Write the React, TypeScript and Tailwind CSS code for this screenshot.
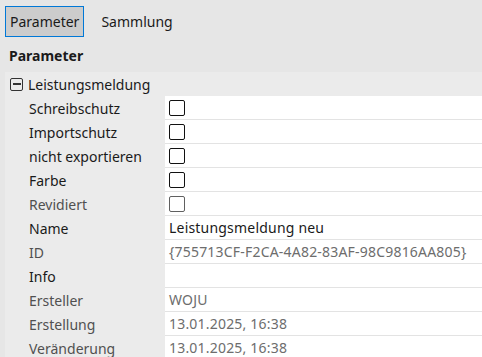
import React from "react";

type Row = {
  label: string;
  value?: string;
  check?: boolean;
  dimLabel?: boolean;
  dimValue?: boolean;
};

const rows: Row[] = [
  { label: "Schreibschutz", check: true },
  { label: "Importschutz", check: true },
  { label: "nicht exportieren", check: true },
  { label: "Farbe", check: true },
  { label: "Revidiert", check: true, dimLabel: true },
  { label: "Name", value: "Leistungsmeldung neu" },
  { label: "ID", value: "{755713CF-F2CA-4A82-83AF-98C9816AA805}", dimLabel: true, dimValue: true },
  { label: "Info", value: "" },
  { label: "Ersteller", value: "WOJU", dimLabel: true, dimValue: true },
  { label: "Erstellung", value: "13.01.2025, 16:38", dimLabel: true, dimValue: true },
  { label: "Veränderung", value: "13.01.2025, 16:38", dimLabel: true, dimValue: true },
];

export default function App() {
  return (
    <div
      className="h-[357px] w-[482px] overflow-hidden bg-[#e6e6e6] text-[14px] text-[#1a1a1a]"
      style={{ fontFamily: '"Noto Sans", "Open Sans", sans-serif' }}
    >
      {/* Tabs */}
      <div className="flex items-center gap-[17px] px-[5px] pt-[6px]">
        <div className="flex h-[31px] items-center border border-[#0078d7] bg-[#cccccc] px-[4px]">
          Parameter
        </div>
        <div>Sammlung</div>
      </div>

      <div className="mt-[8px] pl-[9px] font-bold">Parameter</div>

      {/* Property grid */}
      <div className="mt-[6px] ml-[5px] bg-[#ebebeb]">
        <div className="flex h-[24px] items-center gap-[5px] pl-[5px]">
          <span className="flex h-[13px] w-[13px] items-center justify-center rounded-[2px] border border-[#333]">
            <span className="h-[1.5px] w-[8px] bg-[#333]" />
          </span>
          <span>Leistungsmeldung</span>
        </div>
        {rows.map((r) => (
          <div key={r.label} className="flex h-[24px] pl-[20px]">
            <div
              className={`flex w-[140px] items-center pl-[4px] ${r.dimLabel ? "text-[#505050]" : ""}`}
            >
              {r.label}
            </div>
            <div className="flex flex-1 items-center border-b border-[#e3e3e3] bg-white pl-[4px]">
              {r.check ? (
                <span
                  className={`h-[16px] w-[16px] rounded-[2px] border ${r.dimLabel ? "border-[#606060]" : "border-[#111]"}`}
                />
              ) : (
                <span className={`tracking-[0.2px] ${r.dimValue ? "text-[#6d6d6d]" : ""}`}>{r.value}</span>
              )}
            </div>
          </div>
        ))}
      </div>
    </div>
  );
}
